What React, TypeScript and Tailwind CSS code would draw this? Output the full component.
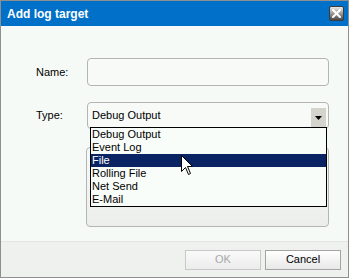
const items = ["Debug Output", "Event Log", "File", "Rolling File", "Net Send", "E-Mail"]
const selected = 2

const CloseButton = () => (
    <div className="flex h-[15px] w-[15px] items-center justify-center rounded-[2px] border border-[#3c3c3c] bg-gradient-to-b from-[#e8e8e8] via-[#9a9a9a] to-[#4a4a4a]">
        <svg width="9" height="9" viewBox="0 0 9 9">
            <path d="M1 1 L8 8 M8 1 L1 8" stroke="#ffffff" strokeWidth="2" strokeLinecap="square" />
        </svg>
    </div>
)

// mouse pointer hovering the "File" entry
const Cursor = () => (
    <svg className="absolute left-[180px] top-[129px] z-20" width="13" height="21" viewBox="0 0 13 21">
        <path
            d="M0.5 0.5 L0.5 16.5 L4.5 12.5 L7.5 19.5 L9.5 18.5 L6.5 11.5 L11.5 11.5 Z"
            fill="#ffffff"
            stroke="#000000"
            strokeWidth="1"
            strokeLinejoin="miter"
        />
    </svg>
)

export default function App() {
    return (
        <div className="flex h-[278px] w-[349px] flex-col border border-[#8f8f8f] bg-[#f6faf7] font-['Liberation_Sans',Arial,sans-serif] text-[11px] text-black">
            <div className="flex h-[25px] shrink-0 items-center justify-between bg-[#0070c8] pl-[6px] pr-[4px]">
                <span className="text-[12px] font-bold text-white">Add log target</span>
                <CloseButton />
            </div>

            <div className="relative flex-1 pl-[35px] pt-[32px]">
                <div className="flex items-center">
                    <span className="w-[51px]">Name:</span>
                    <div className="h-[28px] w-[242px] rounded-[4px] border border-[#b4b4b4] bg-[#f7faf7]" />
                </div>

                <div className="mt-[16px] flex items-center">
                    <span className="w-[51px]">Type:</span>
                    <div className="relative h-[27px] w-[242px] rounded-[4px] border border-[#b4b4b4] bg-[#f7faf7]">
                        <div className="flex h-full items-center justify-between pl-[4px] pr-[2px]">
                            <span>Debug Output</span>
                            <div className="mt-[4px] flex h-[19px] w-[15px] items-center justify-center bg-[#d4d4cc]">
                                <svg width="7" height="4" viewBox="0 0 7 4">
                                    <path d="M0 0 H7 L3.5 4 Z" fill="#000000" />
                                </svg>
                            </div>
                        </div>
                        <div className="absolute left-[2px] top-[24px] z-10 w-[237px] border border-black bg-[#f9fdf9]">
                            {items.map((item, i) => (
                                <div
                                    key={item}
                                    className={
                                        i === selected
                                            ? "flex h-[13px] items-center bg-[#0a2463] pl-[1px] leading-none text-white"
                                            : "flex h-[13px] items-center pl-[1px] leading-none"
                                    }
                                >
                                    {item}
                                </div>
                            ))}
                        </div>
                    </div>
                </div>

                <div className="ml-[50px] mt-[18px] h-[80px] w-[243px] rounded-[4px] border border-[#b4b4b4] bg-gradient-to-b from-[#f6faf7] to-[#eceeec]" />

                <Cursor />
            </div>

            <div className="flex h-[36px] shrink-0 items-center justify-end gap-[4px] border-t border-[#e2e6e2] bg-[#eef1ee] pr-[7px]">
                <button className="h-[20px] w-[76px] border border-[#c8c8c8] bg-gradient-to-b from-[#fafafa] to-[#ececec] text-[11px] text-[#a8a8a8]">
                    OK
                </button>
                <button className="h-[20px] w-[76px] border border-[#a4a4a4] bg-gradient-to-b from-[#ffffff] to-[#e8e8e8] text-[11px] text-black">
                    Cancel
                </button>
            </div>
        </div>
    )
}
